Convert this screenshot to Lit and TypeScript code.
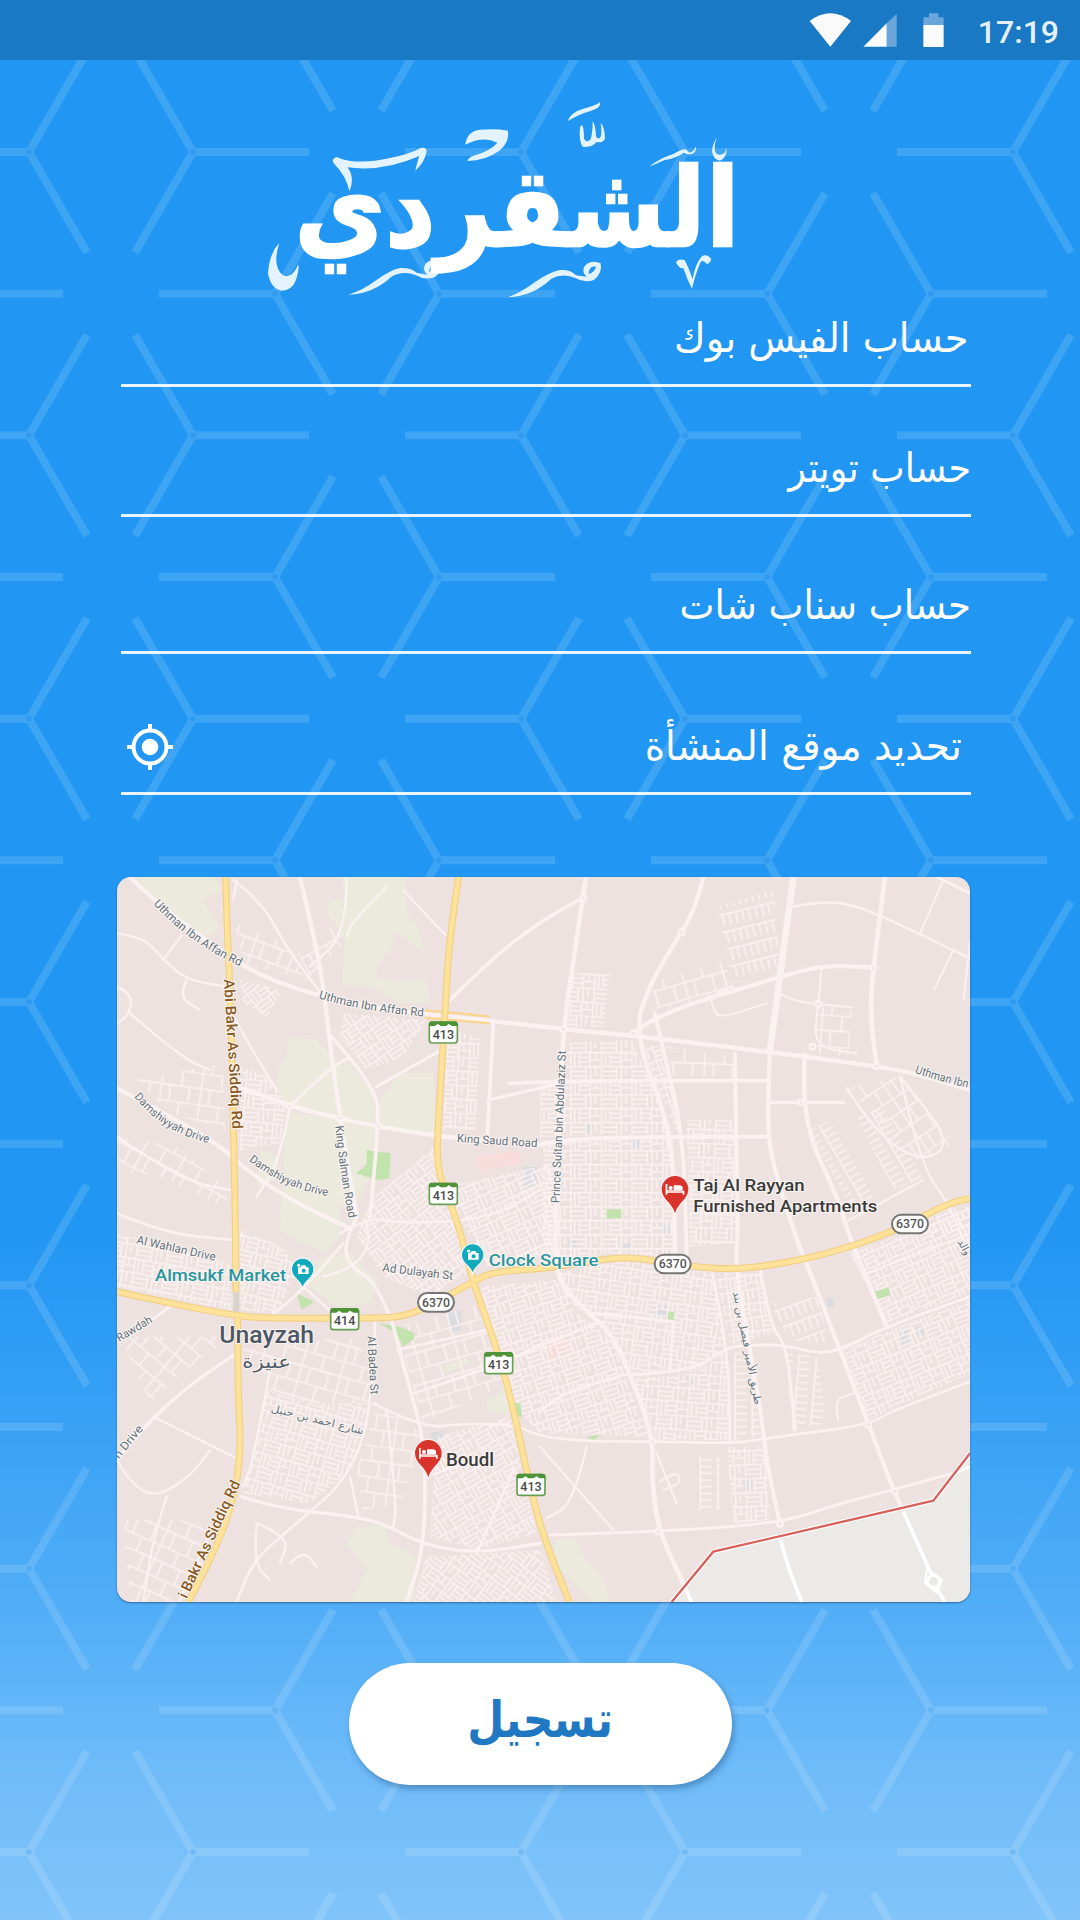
import { LitElement, html, svg, css } from "lit";
import { customElement, property } from "lit/decorators.js";
import { styleMap } from "lit/directives/style-map.js";

type Pt = [number, number];

/* ---------- honeycomb backdrop ---------- */
const ARM = 116;
const HX = 58;
const HY = 100.5;

function combPath(): string {
  let d = "";
  for (let row = -1; row < 14; row++) {
    const y = 152 + row * 141.67;
    const shift = row % 2 === 0 ? 0 : 246;
    for (let col = -1; col < 3; col++) {
      const l = 29 + shift + col * 492;
      const r = l + 164;
      d += `M${l - ARM} ${y}H${l}L${l + HX} ${y - HY}M${l} ${y}L${l + HX} ${y + HY}`;
      d += `M${r + ARM} ${y}H${r}L${r - HX} ${y - HY}M${r} ${y}L${r - HX} ${y + HY}`;
    }
  }
  return d;
}
function combDots(): Pt[] {
  const out: Pt[] = [];
  for (let row = 0; row < 13; row++) {
    for (let col = -1; col < 3; col++) {
      const l = 29 + (row % 2 === 0 ? 0 : 246) + col * 492;
      out.push([l, 152 + row * 141.67], [l + 164, 152 + row * 141.67]);
    }
  }
  return out;
}

@customElement("comb-backdrop")
class CombBackdrop extends LitElement {
  static styles = css`
    :host { display: block; }
    .comb { display: block; width: 1080px; height: 1920px; }
  `;
  render() {
    return html`<svg class="comb" viewBox="0 0 1080 1920" aria-hidden="true">
      <g opacity=".135"><path d=${combPath()} fill="none" stroke="#fff" stroke-width="8" /></g>
      ${combDots().map(([x, y]) => svg`<circle cx=${x} cy=${y} r="2.8" fill="#2a94ea" fill-opacity=${y > 1500 ? 0.25 : 0.6}/>`)}
    </svg>`;
  }
}

/* ---------- status bar ---------- */
@customElement("status-bar")
class StatusBar extends LitElement {
  static styles = css`
    :host { display: flex; align-items: center; justify-content: flex-end; height: 60px; background: #1a79c5; padding-right: 21px; }
    .icons { width: 200px; height: 60px; flex: none; }
    .clock { font: 500 32px/54px Roboto, sans-serif; color: #e3f0fb; width: 79px; padding-top: 4px; text-align: right; white-space: nowrap; display: flex; justify-content: flex-end; }
  `;
  render() {
    return html`
      <svg class="icons" viewBox="0 0 600 180">
        <path d="M89 63Q151 17 213 63L151 140Z" fill="#fafafa" />
        <path d="M350 41V140H320V70Z" fill="#6ba6da" />
        <path d="M250 140L320 70V140Z" fill="#fafafa" />
        <path d="M447 40H475V52H491V76H430V52H447Z" fill="#6ba6da" />
        <path d="M430 75H491V141H430Z" fill="#fafafa" />
      </svg>
      <span class="clock">17:19</span>
    `;
  }
}

/* ---------- word mark ---------- */
@customElement("brand-mark")
class BrandMark extends LitElement {
  static styles = css`
    :host { display: block; }
    .mark { display: block; width: 500px; height: 220px; overflow: visible; }
    .word { font-family: "DejaVu Sans", sans-serif; font-weight: 700; font-size: 328px; }
  `;
  render() {
    return html`<svg class="mark" viewBox="0 0 1500 660">
      <g fill="#e3f3ff">
        <path d="M248 210Q256 196 272 206Q330 224 420 204Q480 192 512 174Q530 170 530 184Q524 218 496 242Q502 214 508 198Q400 246 292 232Q316 262 298 304Q292 262 250 218Z" />
        <path d="M646 164Q650 124 690 119Q740 116 774 122Q780 156 748 182Q706 212 652 213Q654 204 674 196Q722 182 742 158Q700 136 646 164Z" />
        <path d="M952 94Q964 66 1000 56Q1040 46 1050 36Q1054 54 1024 62Q982 74 952 94Z" />
        <path d="M996 104Q1002 114 1002 146Q1010 160 1022 148Q1028 128 1028 94Q1036 102 1038 138Q1044 152 1052 140Q1056 124 1052 98Q1064 110 1065 146Q1058 160 1040 156Q1024 174 998 170Q986 156 990 112Z" />
        <path d="M1198 230Q1226 206 1270 192Q1296 176 1308 178L1318 188Q1334 184 1338 168Q1340 186 1326 192Q1310 194 1302 188Q1280 204 1244 210Z" />
        <path d="M1402 142Q1390 164 1396 186Q1404 202 1424 188L1430 174Q1430 206 1410 212Q1390 210 1386 184Q1388 158 1402 142Z" />
        <path d="M88 458Q72 508 84 536Q98 566 120 556Q136 546 144 524Q150 530 138 570Q126 602 94 602Q62 596 54 550Q58 490 88 458Z" />
        <path d="M296 614Q340 600 374 574Q420 540 450 534Q484 532 500 548L532 554Q516 540 526 522Q546 502 574 514Q580 544 554 562Q524 572 498 556Q460 540 424 560Q372 610 296 614ZM538 546Q556 540 560 522Q538 520 538 546Z" fill-rule="evenodd" />
        <path d="M774 622Q818 604 852 578Q898 546 930 540Q962 538 978 556L1010 560Q994 546 1004 528Q1024 508 1052 520Q1058 550 1032 570Q1002 580 976 564Q938 548 904 566Q850 618 774 622ZM1016 552Q1034 546 1038 530Q1016 526 1016 552Z" fill-rule="evenodd" />
        <path d="M1278 518Q1284 504 1304 510Q1314 528 1328 568Q1334 524 1356 498Q1372 490 1384 508Q1380 520 1370 522Q1360 508 1352 516Q1338 546 1326 596Q1312 570 1300 534Q1290 538 1278 518Z" />
      </g>
      <text class="word" x="801" y="468" text-anchor="middle" direction="rtl" fill="#fff" stroke="#fff" stroke-width="7"
        textLength="1335" lengthAdjust="spacingAndGlyphs">الشقردي</text>
    </svg>`;
  }
}

/* ---------- form field ---------- */
@customElement("line-field")
class LineField extends LitElement {
  @property() label = "";
  @property({ type: Number }) stretch = 1;
  @property({ type: Number }) inset = 0;
  @property({ type: Boolean }) locate = false;
  static styles = css`
    :host { display: flex; flex-direction: column; justify-content: flex-end; border-bottom: 3px solid rgba(255, 255, 255, .9); box-sizing: border-box; }
    .row { display: flex; flex: none; flex-direction: row-reverse; justify-content: space-between; align-items: center; height: 90px; }
    .label { font: 400 36px/60px "DejaVu Sans", sans-serif; color: #fff; white-space: nowrap; transform-origin: 100% 60%; }
    .target { width: 46px; height: 46px; margin-left: 6px; }
  `;
  render() {
    return html`<div class="row">
      <span class="label" dir="rtl" style=${styleMap({ transform: `scale(${this.stretch}, 1.12)`, marginRight: `${this.inset}px` })}>${this.label}</span>
      ${this.locate
        ? html`<svg class="target" viewBox="-23 -23 46 46" fill="none" stroke="#fff" stroke-width="4">
            <circle r="16.5" /><circle r="8.3" fill="#fff" stroke="none" />
            <path d="M0-23V-16M0 23V16M-23 0H-16M23 0H16" />
          </svg>`
        : null}
    </div>`;
  }
}

/* ---------- map ---------- */
const pts = (p: number[]) => {
  let s = "";
  for (let i = 0; i < p.length; i += 2) s += `${p[i]},${p[i + 1]} `;
  return s;
};
/* smooth line through points, rounded at the inner vertices */
const smooth = (p: number[]) => {
  let d = `M${p[0]} ${p[1]}`;
  for (let i = 2; i < p.length - 2; i += 2) {
    d += `Q${p[i]} ${p[i + 1]} ${(p[i] + p[i + 2]) / 2} ${(p[i + 1] + p[i + 3]) / 2}`;
  }
  return d + `L${p[p.length - 2]} ${p[p.length - 1]}`;
};

const PARKS: number[][] = [
  [80, 21, 310, 21, 340, 60, 270, 90, 300, 120, 330, 170, 300, 200, 230, 170, 140, 110],
  [690, 21, 885, 21, 890, 130, 925, 170, 942, 248, 860, 185, 845, 230, 800, 290, 800, 320, 860, 335, 950, 330, 960, 400, 870, 400, 790, 350, 695, 345, 705, 200, 650, 130, 660, 90, 710, 85],
  [540, 500, 620, 510, 700, 590, 700, 650, 720, 750, 690, 745, 540, 710, 500, 660, 505, 590, 530, 560],
  [530, 725, 690, 745, 800, 770, 800, 870, 740, 890, 780, 920, 750, 990, 690, 1010, 690, 1090, 650, 1150, 560, 1110, 510, 1080, 520, 900],
  [870, 610, 970, 610, 980, 790, 810, 770, 810, 690],
  [700, 560, 790, 670, 800, 760, 700, 740],
  [620, 1170, 720, 1150, 800, 1230, 780, 1300, 680, 1310, 600, 1250],
  [740, 1970, 830, 1965, 830, 2010, 915, 2060, 910, 2196, 720, 2196, 770, 2100, 710, 2020],
  [1335, 2010, 1395, 2000, 1420, 2060, 1480, 2120, 1500, 2196, 1450, 2196, 1330, 2080],
  [450, 840, 510, 860, 490, 930, 440, 950],
  [1000, 1490, 1070, 1460, 1080, 1480, 1010, 1510],
  [1130, 1590, 1190, 1560, 1210, 1640, 1130, 1620],
];
const GREENS: number[][] = [
  [770, 840, 800, 845, 842, 850, 838, 925, 800, 930, 738, 910, 770, 885],
  [1490, 1018, 1534, 1018, 1534, 1045, 1490, 1045],
  [1675, 1325, 1693, 1325, 1690, 1350, 1672, 1348],
  [2293, 1265, 2336, 1252, 2340, 1276, 2297, 1290],
  [806, 1360, 870, 1370, 915, 1390, 910, 1410, 878, 1430, 860, 1390],
  [560, 1270, 612, 1295, 575, 1320],
  [1215, 1600, 1232, 1598, 1236, 1640, 1222, 1640],
  [1430, 1703, 1468, 1692, 1455, 1712],
];
const PINKS: number[][] = [
  [1100, 860, 1225, 840, 1235, 880, 1110, 905],
  [1310, 1415, 1360, 1400, 1380, 1440, 1318, 1468],
];
const GREYS: number[][] = [
  [1425, 760, 1443, 760, 1443, 790, 1425, 790], [1565, 808, 1592, 808, 1592, 835, 1565, 835],
  [1240, 890, 1280, 890, 1280, 950, 1240, 950], [1655, 1065, 1680, 1065, 1680, 1090, 1655, 1090],
  [1375, 1108, 1400, 1108, 1400, 1132, 1375, 1132], [1535, 1118, 1560, 1118, 1560, 1140, 1535, 1140],
  [1635, 1305, 1670, 1308, 1668, 1345, 1630, 1340], [1900, 1820, 1925, 1820, 1925, 1858, 1900, 1858],
  [2370, 1390, 2395, 1380, 2400, 1415, 2375, 1425], [2415, 1375, 2440, 1368, 2444, 1390, 2420, 1398],
  [1015, 1325, 1055, 1320, 1055, 1380, 1020, 1385], [2150, 1285, 2170, 1285, 2172, 1310, 2152, 1310],
  [960, 1690, 1000, 1680, 1000, 1710, 970, 1715], [1730, 1525, 1752, 1525, 1752, 1542, 1730, 1542],
];

interface Block { p: number[]; k: string; a: number; }
const BLOCKS: Block[] = [
  { p: [1370, 520, 1565, 510, 1690, 790, 1290, 800, 1290, 640, 1360, 620], k: "dense", a: 0 },
  { p: [1300, 810, 1690, 805, 1690, 1160, 1500, 1150, 1300, 1180], k: "dense", a: 0 },
  { p: [1730, 750, 1870, 750, 1880, 1120, 1740, 1130], k: "dense", a: 2 },
  { p: [1590, 520, 1650, 530, 1715, 780, 1700, 790], k: "dense", a: -18 },
  { p: [1345, 1210, 1540, 1170, 1810, 1200, 1850, 1430, 1760, 1505, 1570, 1515, 1510, 1400, 1360, 1280], k: "dense", a: 8 },
  { p: [1110, 1250, 1340, 1230, 1400, 1330, 1500, 1400, 1620, 1700, 1290, 1690, 1220, 1620], k: "dense", a: -18 },
  { p: [1570, 1525, 1760, 1510, 1850, 1440, 1860, 1710, 1640, 1710], k: "dense", a: 4 },
  { p: [1870, 1450, 1930, 1450, 1950, 1700, 1870, 1710], k: "rows", a: 0 },
  { p: [2030, 1450, 2120, 1460, 2150, 1660, 2040, 1680], k: "rows", a: 5 },
  { p: [1815, 1210, 1950, 1210, 1990, 1390, 1860, 1420], k: "dense", a: -8 },
  { p: [1980, 1300, 2120, 1280, 2160, 1420, 2040, 1410], k: "rows", a: 70 },
  { p: [2220, 1150, 2580, 1020, 2580, 1270, 2330, 1360], k: "dense", a: -24 },
  { p: [2200, 1440, 2340, 1380, 2580, 1290, 2580, 1510, 2380, 1600, 2280, 1650], k: "dense", a: -22 },
  { p: [2460, 1020, 2580, 1010, 2580, 1080, 2440, 1110], k: "dense", a: -24 },
  { p: [1010, 480, 1110, 500, 1095, 780, 1000, 780], k: "dense", a: 3 },
  { p: [700, 430, 950, 450, 880, 560, 770, 600, 690, 500], k: "dense", a: -35 },
  { p: [375, 160, 510, 210, 590, 330, 400, 280], k: "sparse", a: 20 },
  { p: [390, 590, 480, 620, 530, 700, 510, 820, 390, 840], k: "dense", a: 5 },
  { p: [560, 240, 700, 150, 700, 220, 600, 320], k: "sparse", a: -30 },
  { p: [390, 330, 520, 360, 470, 440, 400, 400], k: "dense", a: -38 },
  { p: [80, 630, 340, 580, 345, 780, 180, 730], k: "sparse", a: 8 },
  { p: [21, 800, 200, 830, 360, 960, 340, 1010, 150, 920, 21, 900], k: "sparse", a: 28 },
  { p: [21, 1090, 360, 1180, 365, 1320, 21, 1250], k: "dense", a: 10 },
  { p: [390, 1080, 520, 1130, 560, 1200, 500, 1330, 390, 1320], k: "dense", a: 14 },
  { p: [780, 990, 970, 830, 1040, 1020, 1080, 1200, 960, 1280, 820, 1220, 740, 1100], k: "dense", a: -38 },
  { p: [1010, 950, 1330, 880, 1330, 1150, 1120, 1190], k: "dense", a: -24 },
  { p: [390, 1440, 720, 1400, 790, 1480, 780, 1600, 600, 1600, 480, 1560], k: "sparse", a: 16 },
  { p: [470, 1560, 600, 1600, 780, 1600, 720, 1800, 600, 1900, 400, 1870], k: "dense", a: 16 },
  { p: [800, 1610, 900, 1660, 940, 1700, 870, 1900, 760, 1920, 740, 1800], k: "sparse", a: 8 },
  { p: [30, 1400, 360, 1400, 180, 1540, 120, 1600], k: "sparse", a: 40 },
  { p: [860, 1370, 1120, 1300, 1190, 1540, 940, 1660], k: "sparse", a: -16 },
  { p: [980, 1700, 1200, 1640, 1280, 1990, 1100, 2040, 960, 2000], k: "dense", a: -30 },
  { p: [950, 2060, 1290, 2040, 1340, 2196, 910, 2196], k: "dense", a: 38 },
  { p: [1820, 110, 1990, 60, 2010, 300, 1870, 340, 1850, 250], k: "rows", a: 76 },
  { p: [1620, 340, 1840, 270, 1870, 350, 1640, 430], k: "sparse", a: -16 },
  { p: [1385, 310, 1500, 310, 1480, 470, 1370, 470], k: "dense", a: 4 },
  { p: [2210, 655, 2370, 620, 2530, 820, 2430, 880, 2300, 740], k: "sparse", a: -34 },
  { p: [2090, 780, 2170, 750, 2290, 980, 2230, 1020], k: "rows", a: -30 },
  { p: [2240, 740, 2320, 710, 2450, 920, 2350, 960], k: "rows", a: -30 },
  { p: [1750, 1760, 1830, 1760, 1830, 1920, 1760, 1920], k: "rows", a: 0 },
  { p: [1850, 1730, 1970, 1730, 1980, 1950, 1870, 1960], k: "dense", a: -2 },
  { p: [1670, 530, 1870, 560, 1870, 620, 1690, 620], k: "sparse", a: 2 },
  { p: [2120, 410, 2225, 420, 2215, 560, 2110, 550], k: "sparse", a: 4 },
  { p: [40, 1950, 240, 1950, 330, 1990, 220, 2196, 60, 2196], k: "sparse", a: 24 },
];

/* width followed by coordinates */
const ROADS: number[][] = [
  [13, 60, 21, 130, 90, 260, 190, 400, 290, 500, 335, 600, 370, 780, 410, 945, 432, 1140, 452, 1360, 478, 1570, 497, 1970, 545, 2300, 588, 2420, 612, 2580, 660],
  [14, 1428, 21, 1390, 270, 1360, 478, 1350, 700, 1335, 1080, 1340, 1240, 1450, 1340, 1510, 1400, 1580, 1560, 1630, 1710, 1625, 1830, 1645, 1980, 1720, 2140, 1745, 2196],
  [13, 1780, 21, 1755, 120, 1700, 210, 1620, 340, 1570, 490, 1690, 790, 1695, 1160],
  [12, 1635, 430, 1650, 500, 1720, 790, 1730, 1160],
  [20, 2050, 21, 2010, 320, 1980, 540],
  [13, 1980, 540, 1970, 760, 1990, 890, 2060, 1110, 2090, 1180, 2190, 1440, 2275, 1660, 2350, 1860, 2385, 1930],
  [14, 2325, 21, 2290, 290, 2280, 430, 2300, 588],
  [13, 1570, 490, 1630, 435, 2010, 320, 2140, 286, 2290, 292],
  [11, 1200, 640, 1390, 632, 1970, 632], [12, 1270, 830, 1340, 802, 1970, 800],
  [12, 1875, 550, 1878, 800, 1885, 1080, 1875, 1200, 1950, 1600, 1970, 1780, 2010, 1960],
  [13, 2085, 555, 2070, 740, 2190, 1000, 2210, 1080, 2330, 1370], [10, 1980, 697, 2200, 697],
  [13, 570, 21, 630, 270, 655, 480, 690, 745, 740, 1040],
  [11, 655, 490, 800, 650, 805, 770, 780, 1040], [13, 380, 648, 540, 710, 690, 745, 805, 770, 980, 798, 1110, 810],
  [12, 21, 655, 300, 800, 420, 910, 560, 1000, 720, 1075], [9, 540, 710, 640, 610, 720, 560], [9, 800, 650, 985, 545],
  [8, 21, 800, 210, 930, 360, 960], [8, 21, 1030, 160, 1090, 370, 1110], [11, 1010, 400, 1140, 270, 1290, 155, 1425, 80],
  [11, 1150, 460, 1132, 800], [10, 1135, 690, 1350, 640], [8, 370, 30, 460, 100, 520, 220, 640, 380],
  [7, 380, 30, 370, 90], [7, 710, 21, 710, 190, 600, 290], [7, 830, 50, 730, 150, 710, 200], [7, 880, 60, 990, 180, 1015, 200],
  [7, 21, 190, 100, 200, 160, 270, 230, 330, 350, 350], [7, 160, 270, 215, 195], [7, 21, 350, 65, 370, 60, 430, 21, 460],
  [7, 60, 430, 210, 560, 300, 600], [7, 350, 400, 420, 530, 500, 660], [7, 230, 330, 205, 380, 270, 420],
  [7, 690, 1090, 780, 1040, 860, 1060, 1130, 1050, 1290, 960], [8, 540, 710, 510, 870, 440, 980],
  [10, 740, 1040, 700, 1120, 720, 1190, 790, 1230, 845, 1350], [8, 700, 1120, 590, 1250, 480, 1340],
  [7, 640, 1220, 720, 1200, 780, 1130, 770, 1060], [8, 580, 1250, 680, 1340],
  [11, 845, 1350, 900, 1560, 935, 1680, 947, 1820, 940, 2040, 890, 2196],
  [10, 395, 1880, 500, 1915, 740, 1940, 830, 1965, 940, 2025, 1100, 2050, 1290, 2020],
  [8, 860, 1440, 1130, 1380], [8, 910, 1570, 1100, 1510, 1330, 1410, 1460, 1360],
  [8, 795, 1350, 790, 1600, 720, 1820, 560, 1960, 430, 2070, 380, 2196],
  [8, 790, 1600, 935, 1675, 1060, 1660, 1220, 1665, 1290, 1700, 1440, 1715, 1630, 1714, 1870, 1720, 1970, 1705, 2275, 1665, 2340, 1625, 2580, 1535],
  [10, 380, 1450, 270, 1520, 130, 1640, 21, 1770], [8, 21, 1410, 100, 1370, 180, 1310],
  [7, 130, 1640, 390, 1770], [7, 21, 1770, 60, 1840, 140, 1885, 250, 1810, 300, 1740], [7, 480, 1500, 430, 1770, 400, 1850],
  [7, 720, 1820, 745, 1940], [7, 830, 1620, 860, 1900, 850, 1970], [7, 945, 1820, 1130, 1760],
  [7, 1100, 2050, 1210, 1800], [7, 170, 1880, 130, 2000, 100, 2196], [7, 440, 1960, 430, 2080, 480, 2130],
  [7, 440, 1960, 540, 2000, 510, 2080], [7, 540, 2080, 580, 2040, 620, 2090],
  [9, 1320, 1995, 1645, 1985, 2010, 1960, 2190, 1900, 2350, 1860, 2580, 1795],
  [9, 1570, 1515, 1750, 1505, 1850, 1430, 1940, 1425, 2020, 1425, 2120, 1450, 2190, 1440, 2330, 1370, 2580, 1280],
  [9, 1450, 1330, 1690, 1355], [8, 1690, 1355, 1680, 1500], [9, 1950, 1190, 1980, 1370, 2030, 1425, 2055, 1680],
  [8, 1805, 1200, 1855, 1430, 1860, 1710], [8, 1290, 1625, 1350, 1570, 1560, 1510], [7, 1290, 1730, 1510, 1980],
  [7, 1430, 1730, 1390, 1900, 1310, 1945], [7, 2050, 110, 2140, 93, 2230, 105, 2320, 140, 2580, 265],
  [6, 2500, 30, 2430, 190], [6, 2530, 240, 2475, 355], [6, 2580, 220, 2560, 390], [8, 2480, 21, 2580, 70],
  [6, 2010, 370, 2040, 395, 2225, 412], [6, 2135, 295, 2125, 400, 2110, 530, 2240, 550],
  [7, 2370, 620, 2430, 880, 2515, 1000, 2560, 1110], [7, 2210, 655, 2290, 780, 2430, 880, 2530, 820, 2370, 620],
  [6, 2200, 1060, 2440, 930], [6, 2270, 1210, 2580, 1090], [7, 2330, 1370, 2260, 1210],
  [6, 1870, 350, 1800, 370, 1810, 420, 1830, 445, 1970, 400], [6, 2185, 1650, 2170, 1590, 2230, 1570],
  [7, 1640, 1750, 1700, 1900], [6, 1650, 1835, 1700, 1800, 1715, 1840, 1660, 1860],
];
const WHITE_ROADS: number[][] = [
  [11, 1722, 2145, 1745, 2196], [11, 2012, 2010, 2030, 2080, 2075, 2196], [11, 2380, 1925, 2465, 2115], [11, 2478, 2150, 2504, 2196], [9, 2535, 1810, 2580, 1790],
];
const HIGHWAYS: number[][] = [
  [347, 21, 352, 200, 362, 400, 370, 750, 377, 1110, 377, 1265],
  [383, 1335, 383, 1450, 386, 1600, 392, 1720, 380, 1850, 340, 1980, 290, 2090, 235, 2196],
  [1046, 21, 1018, 200, 1005, 430, 995, 600, 985, 750, 980, 890, 1010, 970, 1050, 1080, 1088, 1235, 1170, 1460, 1220, 1660, 1260, 1850, 1300, 2000, 1378, 2196],
  [21, 1265, 180, 1300, 380, 1338, 480, 1345, 820, 1345, 900, 1335, 990, 1290, 1090, 1235, 1150, 1205, 1290, 1197, 1400, 1180, 1540, 1160, 1640, 1172, 1740, 1190, 1870, 1198, 1990, 1185, 2140, 1155, 2290, 1107, 2400, 1060, 2515, 1000, 2580, 985],
];
const NODES: Pt[] = [[1360, 478], [1570, 490], [2290, 294], [2300, 588], [2125, 402], [2108, 530], [2072, 697], [1628, 1714], [1644, 1985], [2010, 1962], [2275, 1664], [2355, 1864], [540, 708], [690, 745], [805, 768], [1715, 187], [1420, 84], [2515, 1000]];

interface Label { d: string; t: string; s: number; l: number; c?: string; w?: number; }
const STREET = "#626f7a";
const CURVED: Label[] = [
  { d: "M130 102Q230 215 392 290", t: "Uthman Ibn Affan Rd", s: 35, l: 322 },
  { d: "M626 385Q760 425 944 440", t: "Uthman Ibn Affan Rd", s: 35, l: 320 },
  { d: "M342 328L368 780", t: "Abi Bakr As Siddiq Rd", s: 44, l: 450, c: "#8a5a24", w: 500 },
  { d: "M72 680Q160 790 302 820", t: "Damshiyyah Drive", s: 34, l: 268 },
  { d: "M416 872Q530 960 656 978", t: "Damshiyyah Drive", s: 34, l: 262 },
  { d: "M676 768Q690 910 716 1046", t: "King Salman Road", s: 35, l: 280 },
  { d: "M1040 816L1286 832", t: "King Saud Road", s: 35, l: 242 },
  { d: "M1348 1000L1368 540", t: "Prince Sultan bin Abdulaziz St", s: 35, l: 458 },
  { d: "M2414 608Q2500 640 2660 672", t: "Uthman Ibn", s: 35, l: 165 },
  { d: "M78 1120L320 1174", t: "Al Wahlan Drive", s: 35, l: 242 },
  { d: "M816 1204L1032 1230", t: "Ad Dulayah St", s: 35, l: 213 },
  { d: "M772 1398L782 1578", t: "Al Badea St", s: 35, l: 176 },
  { d: "M28 1416L138 1350", t: "Rawdah", s: 34, l: 118 },
  { d: "M26 1768L114 1660", t: "h Drive", s: 34, l: 118 },
  { d: "M230 2188L396 1830", t: "i Bakr As Siddiq Rd", s: 44, l: 384, c: "#8a5a24", w: 500 },
];

@customElement("city-map")
class CityMap extends LitElement {
  static styles = css`
    :host { display: block; border-radius: 14px; overflow: hidden; background: #ede2df; box-shadow: 0 1px 2px rgba(30, 60, 90, .6); }
    .map { display: block; width: 100%; height: 100%; }
    .lbl { font-family: Roboto, sans-serif; paint-order: stroke; stroke: #fbf6f4; stroke-width: 6px; stroke-linejoin: round; }
    .ar { font-family: "DejaVu Sans", sans-serif; paint-order: stroke; stroke: #fbf6f4; stroke-width: 5px; }
    .num { font-family: Roboto, sans-serif; font-weight: 500; }
  `;

  private text(x: number, y: number, t: string, size: number, len: number, color: string, weight = 500) {
    return svg`<text class="lbl" x=${x} y=${y} font-size=${size} font-weight=${weight} fill=${color} textLength=${len} lengthAdjust="spacingAndGlyphs">${t}</text>`;
  }
  private shield(x: number, y: number, n: string) {
    return svg`<g transform="translate(${x} ${y})">
      <rect x="-42" y="-31" width="84" height="62" rx="8" fill="#fff" stroke="#679f55" stroke-width="5"/>
      <path d="M-43-24Q-43-34-35-34H35Q43-34 43-24V-20H26L16-26L8-20H-8L-16-26L-26-20H-43Z" fill="#4f9339"/>
      <text class="num" y="18" text-anchor="middle" font-size="40" textLength="64" lengthAdjust="spacingAndGlyphs" fill="#4a4a4a">${n}</text></g>`;
  }
  private oval(x: number, y: number) {
    return svg`<g transform="translate(${x} ${y})">
      <rect x="-54" y="-28" width="108" height="56" rx="28" fill="#fff" stroke="#767676" stroke-width="6"/>
      <text class="num" y="13" text-anchor="middle" font-size="38" textLength="84" lengthAdjust="spacingAndGlyphs" fill="#555">6370</text></g>`;
  }
  private hotel(x: number, y: number) {
    return svg`<g transform="translate(${x} ${y})">
      <path d="M0 72C-8 40-40 30-40 0A40 40 0 0 1 40 0C40 30 8 40 0 72Z" fill="#d8342b" stroke="#fbeeee" stroke-width="8" paint-order="stroke"/>
      <path d="M-28-16H-23V6H23V-4Q23-12 13-12H-4V2H-23V16H-28ZM28 16H23V10H-23V4H28Z" fill="#fff"/>
      <circle cx="-13" cy="-4" r="6" fill="#fff"/></g>`;
  }
  private sight(x: number, y: number) {
    return svg`<g transform="translate(${x} ${y})">
      <path d="M0 52C-6 32-32 24-32 0A32 32 0 0 1 32 0C32 24 6 32 0 52Z" fill="#12a9bd" stroke="#f4fafa" stroke-width="7" paint-order="stroke"/>
      <path d="M-14-6H-7L-3-12H8L11-6H18V14H-14Z" fill="#fff"/><circle cx="3" cy="4" r="6" fill="#12a9bd"/><circle cx="-12" cy="-12" r="4.5" fill="#fff"/></g>`;
  }

  render() {
    const R = "#fbf1f1";
    return html`<svg class="map" viewBox="21 21 2559 2175" preserveAspectRatio="none">
      <defs>
        ${BLOCKS.map((b, i) => {
          const t = `rotate(${b.a})`;
          if (b.k === "dense")
            return svg`<pattern id="b${i}" width="92" height="84" patternUnits="userSpaceOnUse" patternTransform=${t}>
              <path d="M0 2H92M0 44H92M2 0V84M48 2V44M14 44V84M28 44V84M60 44V84M76 44V66M2 16H48M2 30H48M62 2V44M76 2V30M28 58H60M60 66H92M28 72H60" fill="none" stroke=${R} stroke-width="5"/></pattern>`;
          if (b.k === "rows")
            return svg`<pattern id="b${i}" width="52" height="20" patternUnits="userSpaceOnUse" patternTransform=${t}>
              <path d="M3 0V20M3 10H38" fill="none" stroke=${R} stroke-width="5"/></pattern>`;
          return svg`<pattern id="b${i}" width="120" height="94" patternUnits="userSpaceOnUse" patternTransform=${t}>
              <path d="M0 3H120M3 0V94M62 3V48M3 48H120M88 48V94M30 48V94" fill="none" stroke=${R} stroke-width="5"/></pattern>`;
        })}
        ${CURVED.map((c, i) => svg`<path id="c${i}" d=${c.d}/>`)}
      </defs>
      ${PARKS.map((p) => svg`<polygon points=${pts(p)} fill="#ebeadd"/>`)}
      ${GREYS.map((p) => svg`<polygon points=${pts(p)} fill="#dcdbdf"/>`)}
      ${PINKS.map((p) => svg`<polygon points=${pts(p)} fill="#f8dcdb"/>`)}
      ${BLOCKS.map((b, i) => svg`<polygon points=${pts(b.p)} fill="url(#b${i})"/>`)}
      ${GREENS.map((p) => svg`<polygon points=${pts(p)} fill="#c3e3ae"/>`)}
      <g fill="none" stroke=${R} stroke-linejoin="round" stroke-linecap="round">
        ${ROADS.map((r) => svg`<path d=${smooth(r.slice(1))} stroke-width=${r[0]}/>`)}
      </g>
      <path d="M1685 2196L1810 2045 2470 1892 2580 1750V2196Z" fill="#ebeae7"/>
      <g fill="none" stroke="#fff">${WHITE_ROADS.map((r) => svg`<path d=${smooth(r.slice(1))} stroke-width=${r[0]}/>`)}
        <path d="M2450 2100L2446 2140L2480 2168L2496 2130L2458 2104" stroke-width="7"/>
        <circle cx="2471" cy="2134" r="18" stroke-width="9"/></g>
      ${NODES.map(([x, y]) => svg`<circle cx=${x} cy=${y} r="8" fill="#ede2df" stroke=${R} stroke-width="8"/>`)}
      <path d="M1685 2196L1810 2045 2470 1892 2580 1750" fill="none" stroke="#fff" stroke-width="14"/>
      <path d="M1685 2196L1810 2045 2470 1892 2580 1750" fill="none" stroke="#d9615b" stroke-width="7"/>
      <path d="M945 422L1005 426L1140 440M945 444L1005 448L1140 460" fill="none" stroke="#f8d691" stroke-width="7"/>
      <path d="M379 1262V1338" stroke="#d9d2cd" stroke-width="18"/>
      <g fill="none" stroke-linejoin="round">
        ${HIGHWAYS.map((h) => svg`<path d=${smooth(h)} stroke="#f3cf86" stroke-width="21"/>`)}
        ${HIGHWAYS.map((h) => svg`<path d=${smooth(h)} stroke="#fee29a" stroke-width="14"/>`)}
      </g>
      ${CURVED.map((c, i) => svg`<text class="lbl" font-size=${c.s} font-weight=${c.w ?? 400} fill=${c.c ?? STREET} textLength=${c.l} lengthAdjust="spacingAndGlyphs"><textPath href="#c${i}">${c.t}</textPath></text>`)}
      <text class="ar" transform="translate(620 1659) rotate(14)" y="0" text-anchor="middle" direction="rtl" font-size="31" fill=${STREET} textLength="285" lengthAdjust="spacingAndGlyphs">شارع احمد بن حنبل</text>
      <text class="ar" transform="translate(1908 1435) rotate(79)" y="6" text-anchor="middle" direction="rtl" font-size="31" fill=${STREET} textLength="345" lengthAdjust="spacingAndGlyphs">طريق الأمير فيصل بن بند</text>
      <text class="ar" transform="translate(2556 1136) rotate(62)" y="2" text-anchor="middle" direction="rtl" font-size="31" fill=${STREET}>والد</text>
      ${this.shield(1000, 488, "413")} ${this.shield(1000, 972, "413")} ${this.shield(704, 1348, "414")}
      ${this.shield(1166, 1480, "413")} ${this.shield(1263, 1845, "413")}
      ${this.oval(978, 1297)} ${this.oval(1688, 1182)} ${this.oval(2400, 1062)}
      ${this.hotel(1695, 958)} ${this.hotel(955, 1750)} ${this.sight(578, 1198)} ${this.sight(1088, 1155)}
      ${this.text(1750, 962, "Taj Al Rayyan", 52, 334, "#3a3a3a")}
      ${this.text(1750, 1026, "Furnished Apartments", 52, 552, "#3a3a3a")}
      ${this.text(1008, 1787, "Boudl", 53, 144, "#3a3a3a")}
      ${this.text(135, 1232, "Almsukf Market", 52, 393, "#2b959e")}
      ${this.text(1136, 1188, "Clock Square", 52, 329, "#2b959e")}
      ${this.text(328, 1420, "Unayzah", 69, 284, "#4d5766")}
      <text class="ar" x="470" y="1495" text-anchor="middle" direction="rtl" font-size="54" fill="#4d5766" textLength="146" lengthAdjust="spacingAndGlyphs">عنيزة</text>
    </svg>`;
  }
}

/* ---------- page ---------- */
@customElement("app-root")
class AppRoot extends LitElement {
  static styles = css`
    :host { display: grid; width: 1080px; height: 1920px; overflow: hidden;
      background: linear-gradient(#2196f3 0, #2196f3 1220px, #35a0f5 1400px, #50adf7 1600px, #70bcf9 1780px, #80c4fa 1920px); }
    .backdrop, .page { grid-area: 1 / 1; }
    .page { display: flex; flex-direction: column; min-width: 0; }
    .brand { margin: 30px 0 0 250px; }
    .form { display: flex; flex-direction: column; width: 850px; margin-left: 121px; }
    .f1 { height: 77px; }
    .f2 { height: 130px; }
    .f3 { height: 137px; }
    .f4 { height: 141px; }
    .map { width: 853px; height: 725px; margin: 82px 0 0 117px; }
    .submit { display: flex; align-items: center; justify-content: center; align-self: flex-start; margin: 61px 0 0 349px; width: 383px; height: 122px; border: 0; border-radius: 61px; background: #fff;
      box-shadow: 2px 4px 6px rgba(20, 70, 120, .4); color: #1f78c1; font: 700 44px/110px "DejaVu Sans", sans-serif; padding: 0 0 8px; }
    .caption { transform: scale(.97, 1.15); }
  `;
  render() {
    return html`
      <comb-backdrop class="backdrop"></comb-backdrop>
      <div class="page">
        <status-bar></status-bar>
        <brand-mark class="brand"></brand-mark>
        <div class="form">
          <line-field class="f1" label="حساب الفيس بوك" stretch="1.065" inset="3"></line-field>
          <line-field class="f2" label="حساب تويتر" stretch="1.015"></line-field>
          <line-field class="f3" label="حساب سناب شات" stretch="1.03"></line-field>
          <line-field class="f4" label="تحديد موقع المنشأة" stretch="1.083" inset="9" locate></line-field>
        </div>
        <city-map class="map"></city-map>
        <button class="submit" dir="rtl"><span class="caption">تسجيل</span></button>
      </div>
    `;
  }
}
